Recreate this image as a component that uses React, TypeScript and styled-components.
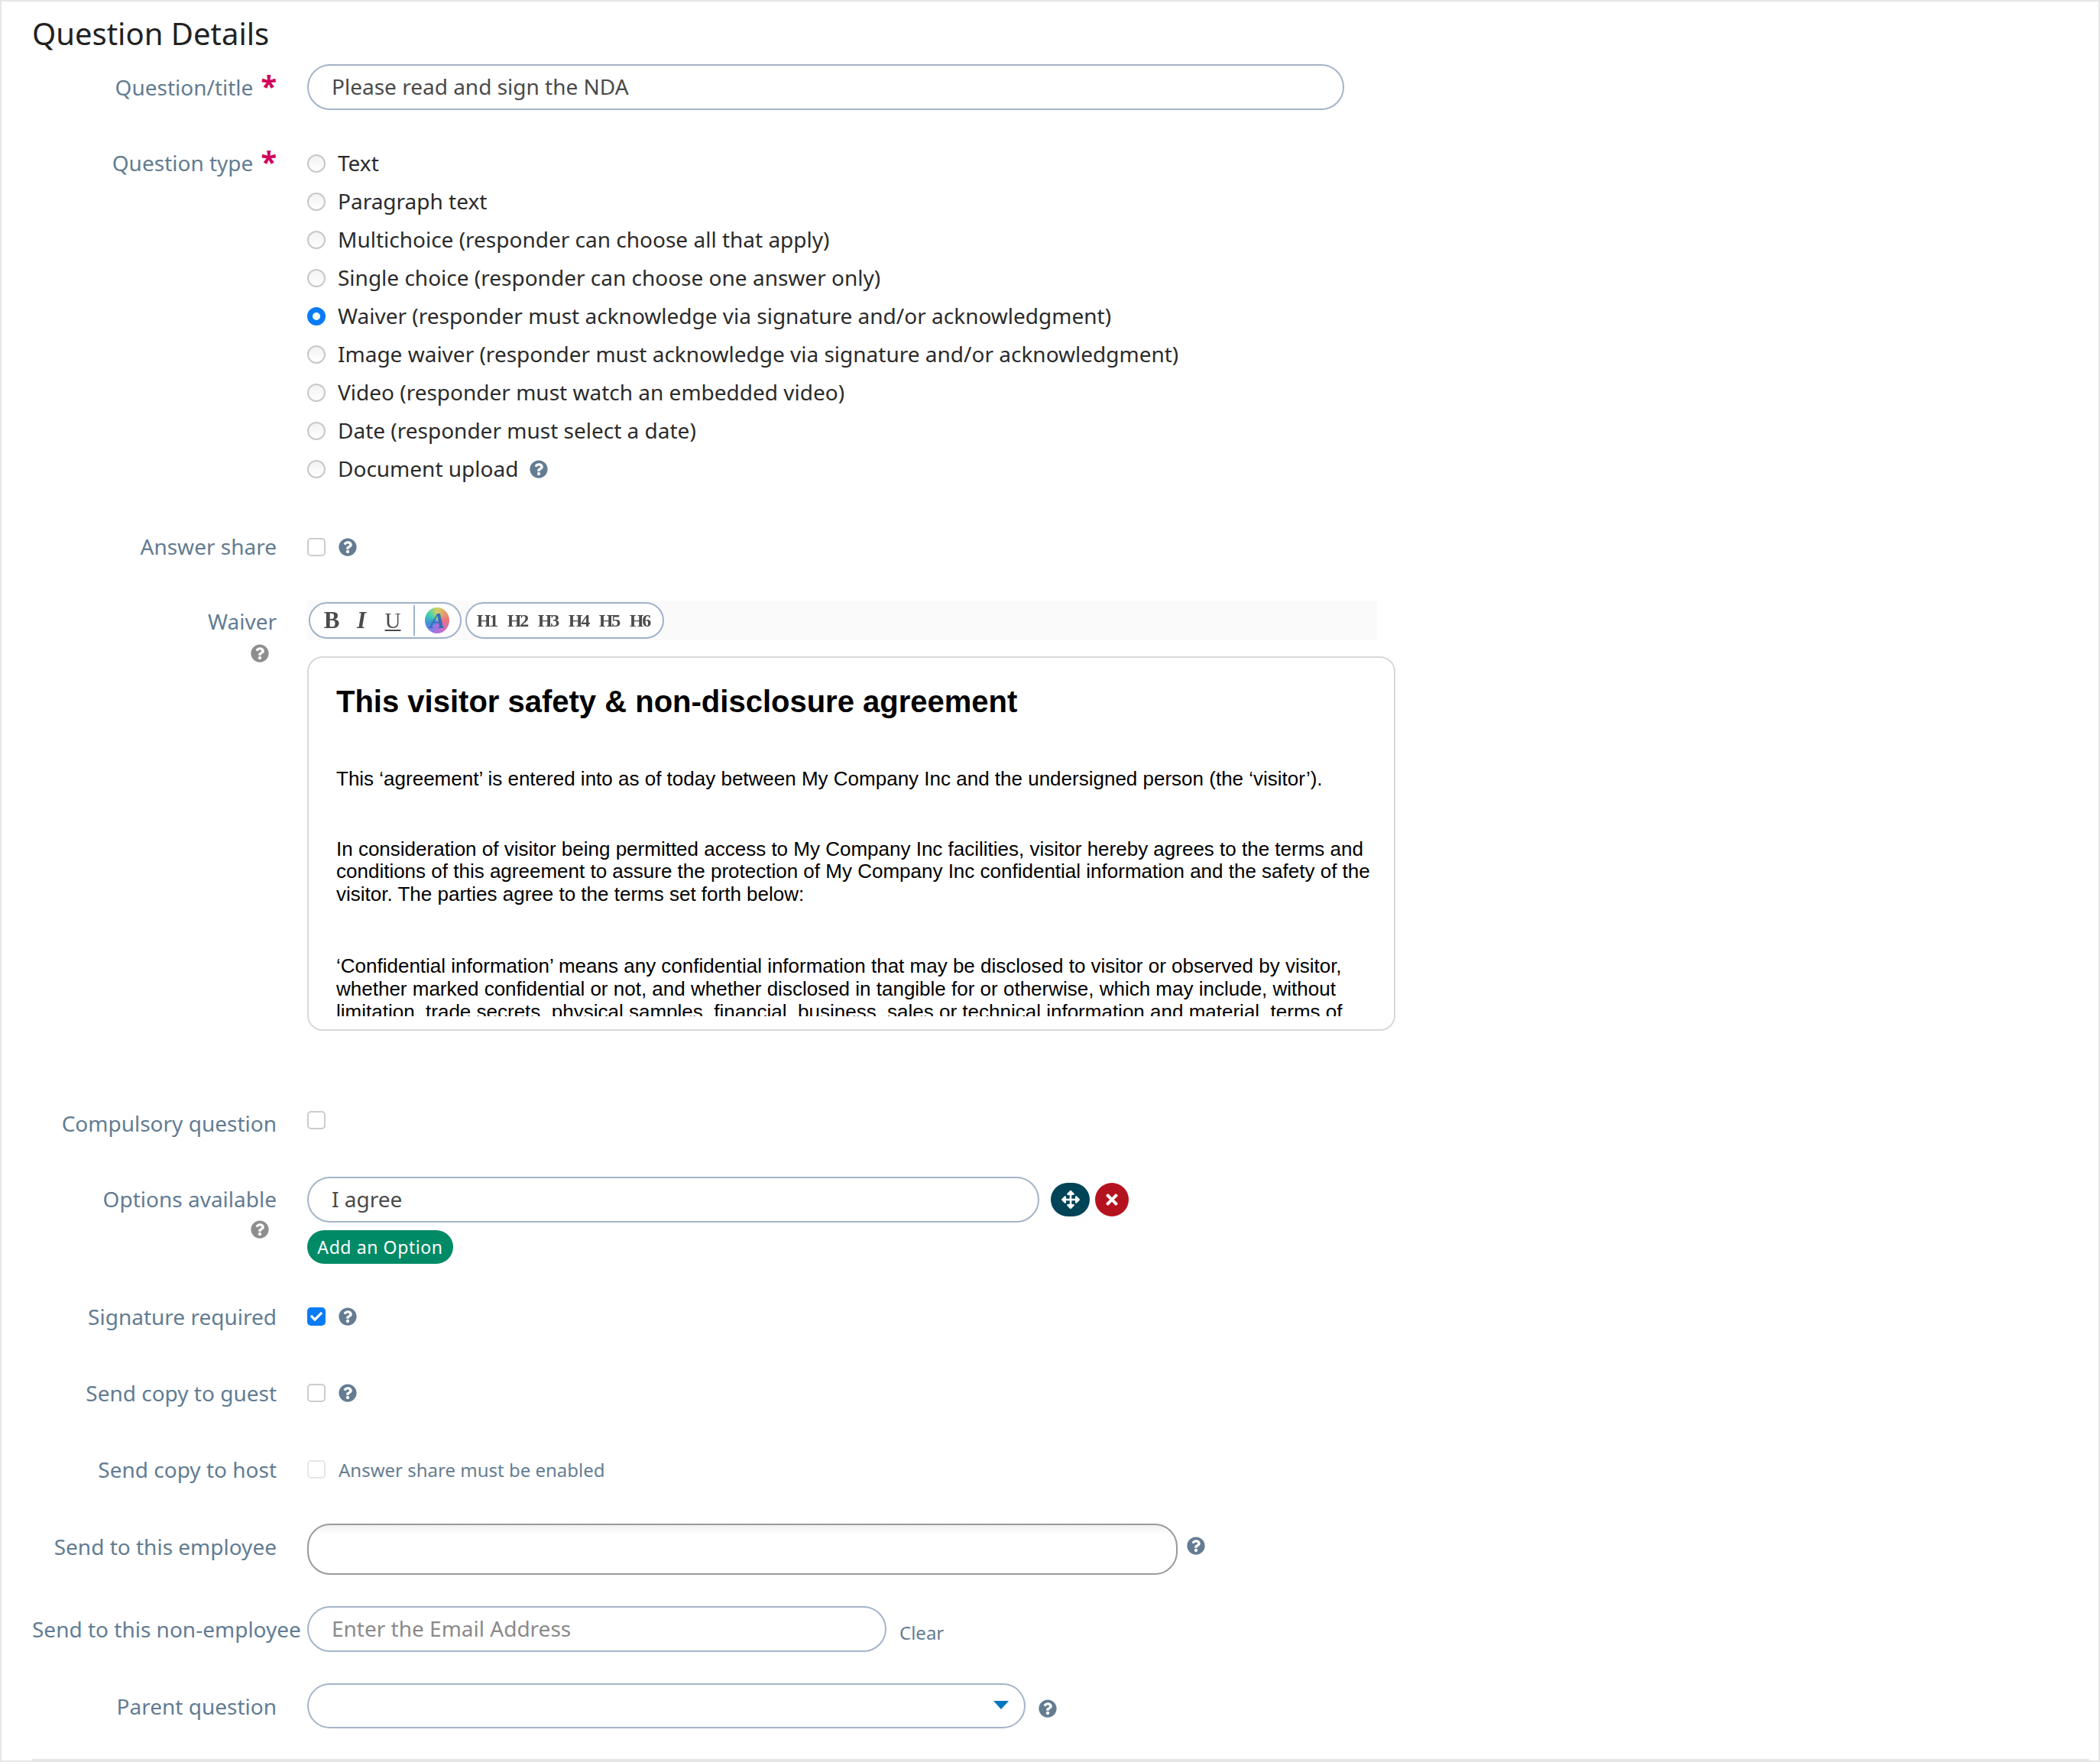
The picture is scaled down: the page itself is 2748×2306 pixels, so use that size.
import React from "react";
import styled, { createGlobalStyle } from "styled-components";
import { FaArrowsAlt, FaCheck, FaQuestionCircle, FaTimes } from "react-icons/fa";

const GlobalStyle = createGlobalStyle`
  html, body {
    margin: 0;
    padding: 0;
    background: #ffffff;
  }
  body {
    font-family: "Noto Sans", "Open Sans", sans-serif;
  }
`;

const Page = styled.div`
  position: relative;
  box-sizing: border-box;
  width: 2748px;
  height: 2306px;
  padding: 0 0 0 40px;
  border: 2px solid #e6e6e6;
  overflow: hidden;
  &::after {
    content: "";
    position: absolute;
    left: 40px;
    right: 12px;
    bottom: 0;
    height: 2px;
    background: #e6e6e6;
  }
`;

const Title = styled.h2`
  margin: 0;
  height: 82px;
  padding-top: 17px;
  box-sizing: border-box;
  font-size: 40px;
  line-height: 50px;
  font-weight: 400;
  color: #222222;
`;

const Row = styled.div<{ $gap?: number; $height?: number }>`
  display: flex;
  align-items: flex-start;
  margin-top: ${(p) => p.$gap ?? 0}px;
  min-height: ${(p) => p.$height ?? 50}px;
`;

const Label = styled.div<{ $line?: number }>`
  flex: 0 0 320px;
  width: 320px;
  margin-right: 40px;
  text-align: right;
  white-space: nowrap;
  font-size: 28px;
  line-height: ${(p) => p.$line ?? 50}px;
  color: #627c92;
`;

const Star = styled.span`
  margin-left: 10px;
  color: #d1045c;
  font-size: 38px;
  font-weight: 700;
  line-height: 0;
  vertical-align: -2px;
`;

const LabelHelp = styled.div<{ $top: number }>`
  display: flex;
  justify-content: flex-end;
  padding-right: 10px;
  color: #8e8e8e;
  font-size: 24px;
  line-height: 24px;
  margin-top: ${(p) => p.$top}px;
`;

const Control = styled.div`
  display: flex;
  flex-direction: column;
`;

const Inline = styled.div<{ $height?: number }>`
  display: flex;
  align-items: center;
  height: ${(p) => p.$height ?? 50}px;
`;

const TextInput = styled.input<{ $width: number; $height?: number }>`
  box-sizing: border-box;
  width: ${(p) => p.$width}px;
  height: ${(p) => p.$height ?? 60}px;
  padding: 0 30px 2px;
  border: 2px solid #a4b4c9;
  border-radius: 30px;
  outline: none;
  background: #ffffff;
  font-family: "Noto Sans", sans-serif;
  font-size: 28px;
  color: #4a4a4a;
  &::placeholder {
    color: #8a8a8a;
    opacity: 1;
  }
`;

const SearchBox = styled.div`
  box-sizing: border-box;
  width: 1139px;
  height: 67px;
  border: 2px solid #9a9a9a;
  border-radius: 30px;
  background: linear-gradient(#f0f0f0 0, #ffffff 12px);
`;

const SelectBox = styled.div`
  box-sizing: border-box;
  display: flex;
  justify-content: flex-end;
  align-items: center;
  width: 940px;
  height: 59px;
  padding-right: 20px;
  border: 2px solid #a4b4c9;
  border-radius: 30px;
`;

const Caret = styled.div`
  width: 0;
  height: 0;
  margin-top: -2px;
  border-left: 10px solid transparent;
  border-right: 10px solid transparent;
  border-top: 11px solid #0077c0;
`;

const Radio = styled.input`
  appearance: none;
  box-sizing: border-box;
  flex: none;
  width: 24px;
  height: 24px;
  margin: 0 16px 0 0;
  border: 2px solid #c8c8c8;
  border-radius: 50%;
  background: linear-gradient(#f2f2f2, #ffffff);
  &:checked {
    border: 7px solid #0a7bf5;
    background: #ffffff;
  }
`;

const OptionText = styled.span`
  margin-bottom: 2px;
  font-size: 28px;
  line-height: 50px;
  color: #2b2b2b;
`;

const CheckBox = styled.div<{ $on?: boolean; $faint?: boolean }>`
  box-sizing: border-box;
  display: flex;
  align-items: center;
  justify-content: center;
  flex: none;
  width: 24px;
  height: 24px;
  border-radius: 5px;
  border: ${(p) => (p.$on ? "none" : `2px solid ${p.$faint ? "#e6e6e6" : "#cccccc"}`)};
  background: ${(p) => (p.$on ? "#0a7bf5" : "#ffffff")};
  color: #ffffff;
  font-size: 16px;
`;

const Help = styled.span<{ $left?: number; $shift?: number }>`
  display: inline-flex;
  margin-left: ${(p) => p.$left ?? 17}px;
  margin-top: ${(p) => p.$shift ?? 0}px;
  color: #647c92;
  font-size: 24px;
`;

const Hint = styled.span`
  margin-left: 17px;
  font-size: 24px;
  color: #667d91;
`;

const ClearLink = styled.span`
  margin-left: 17px;
  margin-top: 8px;
  font-size: 24px;
  color: #667d91;
`;

const Toolbar = styled.div`
  box-sizing: border-box;
  display: flex;
  align-items: center;
  gap: 5px;
  width: 1400px;
  height: 52px;
  padding-left: 2px;
  background: #fafafa;
`;

const ToolGroup = styled.div<{ $left: number; $right: number }>`
  box-sizing: border-box;
  display: flex;
  align-items: center;
  height: 48px;
  padding: 0 ${(p) => p.$right}px 0 ${(p) => p.$left}px;
  border: 2px solid #a0b2c9;
  border-radius: 24px;
  background: #ffffff;
`;

const ToolGlyph = styled.span<{ $italic?: boolean; $under?: boolean; $width: number }>`
  width: ${(p) => p.$width}px;
  text-align: center;
  font-family: "Liberation Serif", serif;
  font-size: ${(p) => (p.$under ? 29 : 31)}px;
  font-weight: ${(p) => (p.$under ? 400 : 700)};
  font-style: ${(p) => (p.$italic ? "italic" : "normal")};
  text-decoration: ${(p) => (p.$under ? "underline" : "none")};
  color: #4b4b4b;
  filter: blur(0.6px);
`;

const HeadGlyph = styled.span`
  width: 40px;
  text-align: center;
  font-family: "Liberation Serif", serif;
  font-size: 24px;
  font-weight: 700;
  letter-spacing: -2px;
  color: #4b4b4b;
  filter: blur(0.5px);
`;

const ToolDivider = styled.div`
  width: 2px;
  height: 40px;
  margin: 0 13px 0 5px;
  background: #a0b2c9;
`;

const ColorGlyph = styled.span`
  display: flex;
  align-items: center;
  justify-content: center;
  width: 32px;
  height: 34px;
  border-radius: 50%;
  background: conic-gradient(#d0d060, #f07080 25%, #b070e0 50%, #4090d8 70%, #40d0b0 85%, #d0d060);
  font-family: "Liberation Serif", serif;
  font-size: 30px;
  font-weight: 700;
  font-style: italic;
  color: #2f6fc0;
`;

const Editor = styled.div`
  box-sizing: border-box;
  width: 1424px;
  height: 490px;
  margin-top: 21px;
  padding: 0 30px 0 36px;
  border: 2px solid #d8d8d8;
  border-radius: 20px;
`;

const EditorScroll = styled.div`
  height: 469px;
  overflow: hidden;
  font-family: "Liberation Sans", Arial, sans-serif;
  font-size: 26px;
  line-height: 29.6px;
  color: #000000;
`;

const EditorHeading = styled.h1`
  margin: 0;
  padding-top: 34px;
  font-size: 40px;
  line-height: 46px;
  font-weight: 700;
`;

const EditorPara = styled.p<{ $top: number }>`
  margin: ${(p) => p.$top}px 0 0;
`;

const RoundButton = styled.div<{ $color: string; $width: number; $left: number; $icon: number }>`
  display: flex;
  align-items: center;
  justify-content: center;
  width: ${(p) => p.$width}px;
  height: 44px;
  margin-left: ${(p) => p.$left}px;
  border-radius: 22px;
  background: ${(p) => p.$color};
  color: #ffffff;
  font-size: ${(p) => p.$icon}px;
`;

const AddButton = styled.button`
  box-sizing: border-box;
  width: 191px;
  height: 44px;
  margin-top: 10px;
  padding: 0;
  border: none;
  border-radius: 22px;
  background: #008a66;
  color: #ffffff;
  font-family: "Noto Sans", sans-serif;
  font-size: 23px;
  letter-spacing: 0.6px;
`;

const questionTypes = [
  "Text",
  "Paragraph text",
  "Multichoice (responder can choose all that apply)",
  "Single choice (responder can choose one answer only)",
  "Waiver (responder must acknowledge via signature and/or acknowledgment)",
  "Image waiver (responder must acknowledge via signature and/or acknowledgment)",
  "Video (responder must watch an embedded video)",
  "Date (responder must select a date)",
  "Document upload",
];

const headings = ["H1", "H2", "H3", "H4", "H5", "H6"];

export default function App() {
  return (
    <Page>
      <GlobalStyle />
      <Title>Question Details</Title>

      <Row $height={60}>
        <Label $line={60}>
          Question/title<Star>*</Star>
        </Label>
        <TextInput $width={1357} defaultValue="Please read and sign the NDA" />
      </Row>

      <Row $gap={45}>
        <Label $line={48}>
          Question type<Star>*</Star>
        </Label>
        <Control>
          {questionTypes.map((type) => (
            <Inline key={type}>
              <Radio type="radio" name="type" defaultChecked={type.startsWith("Waiver")} />
              <OptionText>{type}</OptionText>
              {type === "Document upload" && (
                <Help $left={15}>
                  <FaQuestionCircle />
                </Help>
              )}
            </Inline>
          ))}
        </Control>
      </Row>

      <Row $gap={52}>
        <Label $line={48}>Answer share</Label>
        <Inline>
          <CheckBox />
          <Help>
            <FaQuestionCircle />
          </Help>
        </Inline>
      </Row>

      <Row $gap={45}>
        <Label $line={54}>
          <div>Waiver</div>
          <LabelHelp $top={3}>
            <FaQuestionCircle />
          </LabelHelp>
        </Label>
        <Control>
          <Toolbar>
            <ToolGroup $left={8} $right={14}>
              <ToolGlyph $width={40}>B</ToolGlyph>
              <ToolGlyph $width={38} $italic>
                I
              </ToolGlyph>
              <ToolGlyph $width={44} $under>
                U
              </ToolGlyph>
              <ToolDivider />
              <ColorGlyph>A</ColorGlyph>
            </ToolGroup>
            <ToolGroup $left={6} $right={10}>
              {headings.map((h) => (
                <HeadGlyph key={h}>{h}</HeadGlyph>
              ))}
            </ToolGroup>
          </Toolbar>
          <Editor>
            <EditorScroll>
              <EditorHeading>This visitor safety &amp; non-disclosure agreement</EditorHeading>
              <EditorPara $top={64}>
                This ‘agreement’ is entered into as of today between My Company Inc and the undersigned person (the ‘visitor’).
              </EditorPara>
              <EditorPara $top={62}>
                In consideration of visitor being permitted access to My Company Inc facilities, visitor hereby agrees to the terms and conditions of this agreement to assure the protection of My Company Inc confidential information and the safety of the visitor. The parties agree to the terms set forth below:
              </EditorPara>
              <EditorPara $top={65}>
                ‘Confidential information’ means any confidential information that may be disclosed to visitor or observed by visitor, whether marked confidential or not, and whether disclosed in tangible for or otherwise, which may include, without limitation, trade secrets, physical samples, financial, business, sales or technical information and material, terms of
              </EditorPara>
            </EditorScroll>
          </Editor>
        </Control>
      </Row>

      <Row $gap={96}>
        <Label>Compulsory question</Label>
        <Inline $height={42}>
          <CheckBox />
        </Inline>
      </Row>

      <Row $gap={45}>
        <Label $line={58}>
          <div>Options available</div>
          <LabelHelp $top={-1}>
            <FaQuestionCircle />
          </LabelHelp>
        </Label>
        <Control>
          <Inline $height={60}>
            <TextInput $width={958} defaultValue="I agree" />
            <RoundButton $color="#004458" $width={51} $left={15} $icon={24}>
              <FaArrowsAlt />
            </RoundButton>
            <RoundButton $color="#b5121f" $width={44} $left={7} $icon={22}>
              <FaTimes />
            </RoundButton>
          </Inline>
          <AddButton>Add an Option</AddButton>
        </Control>
      </Row>

      <Row $gap={44}>
        <Label>Signature required</Label>
        <Inline>
          <CheckBox $on>
            <FaCheck />
          </CheckBox>
          <Help>
            <FaQuestionCircle />
          </Help>
        </Inline>
      </Row>

      <Row $gap={50}>
        <Label>Send copy to guest</Label>
        <Inline>
          <CheckBox />
          <Help>
            <FaQuestionCircle />
          </Help>
        </Inline>
      </Row>

      <Row $gap={50}>
        <Label>Send copy to host</Label>
        <Inline>
          <CheckBox $faint />
          <Hint>Answer share must be enabled</Hint>
        </Inline>
      </Row>

      <Row $gap={46} $height={67}>
        <Label $line={60}>Send to this employee</Label>
        <Inline $height={67}>
          <SearchBox />
          <Help $left={12} $shift={-9}>
            <FaQuestionCircle />
          </Help>
        </Inline>
      </Row>

      <Row $gap={41} $height={60}>
        <Label $line={60}>Send to this non-employee</Label>
        <Inline $height={60}>
          <TextInput $width={758} placeholder="Enter the Email Address" />
          <ClearLink>Clear</ClearLink>
        </Inline>
      </Row>

      <Row $gap={41} $height={59}>
        <Label $line={60}>Parent question</Label>
        <Inline $height={59}>
          <SelectBox>
            <Caret />
          </SelectBox>
          <Help $left={17} $shift={6}>
            <FaQuestionCircle />
          </Help>
        </Inline>
      </Row>
    </Page>
  );
}
